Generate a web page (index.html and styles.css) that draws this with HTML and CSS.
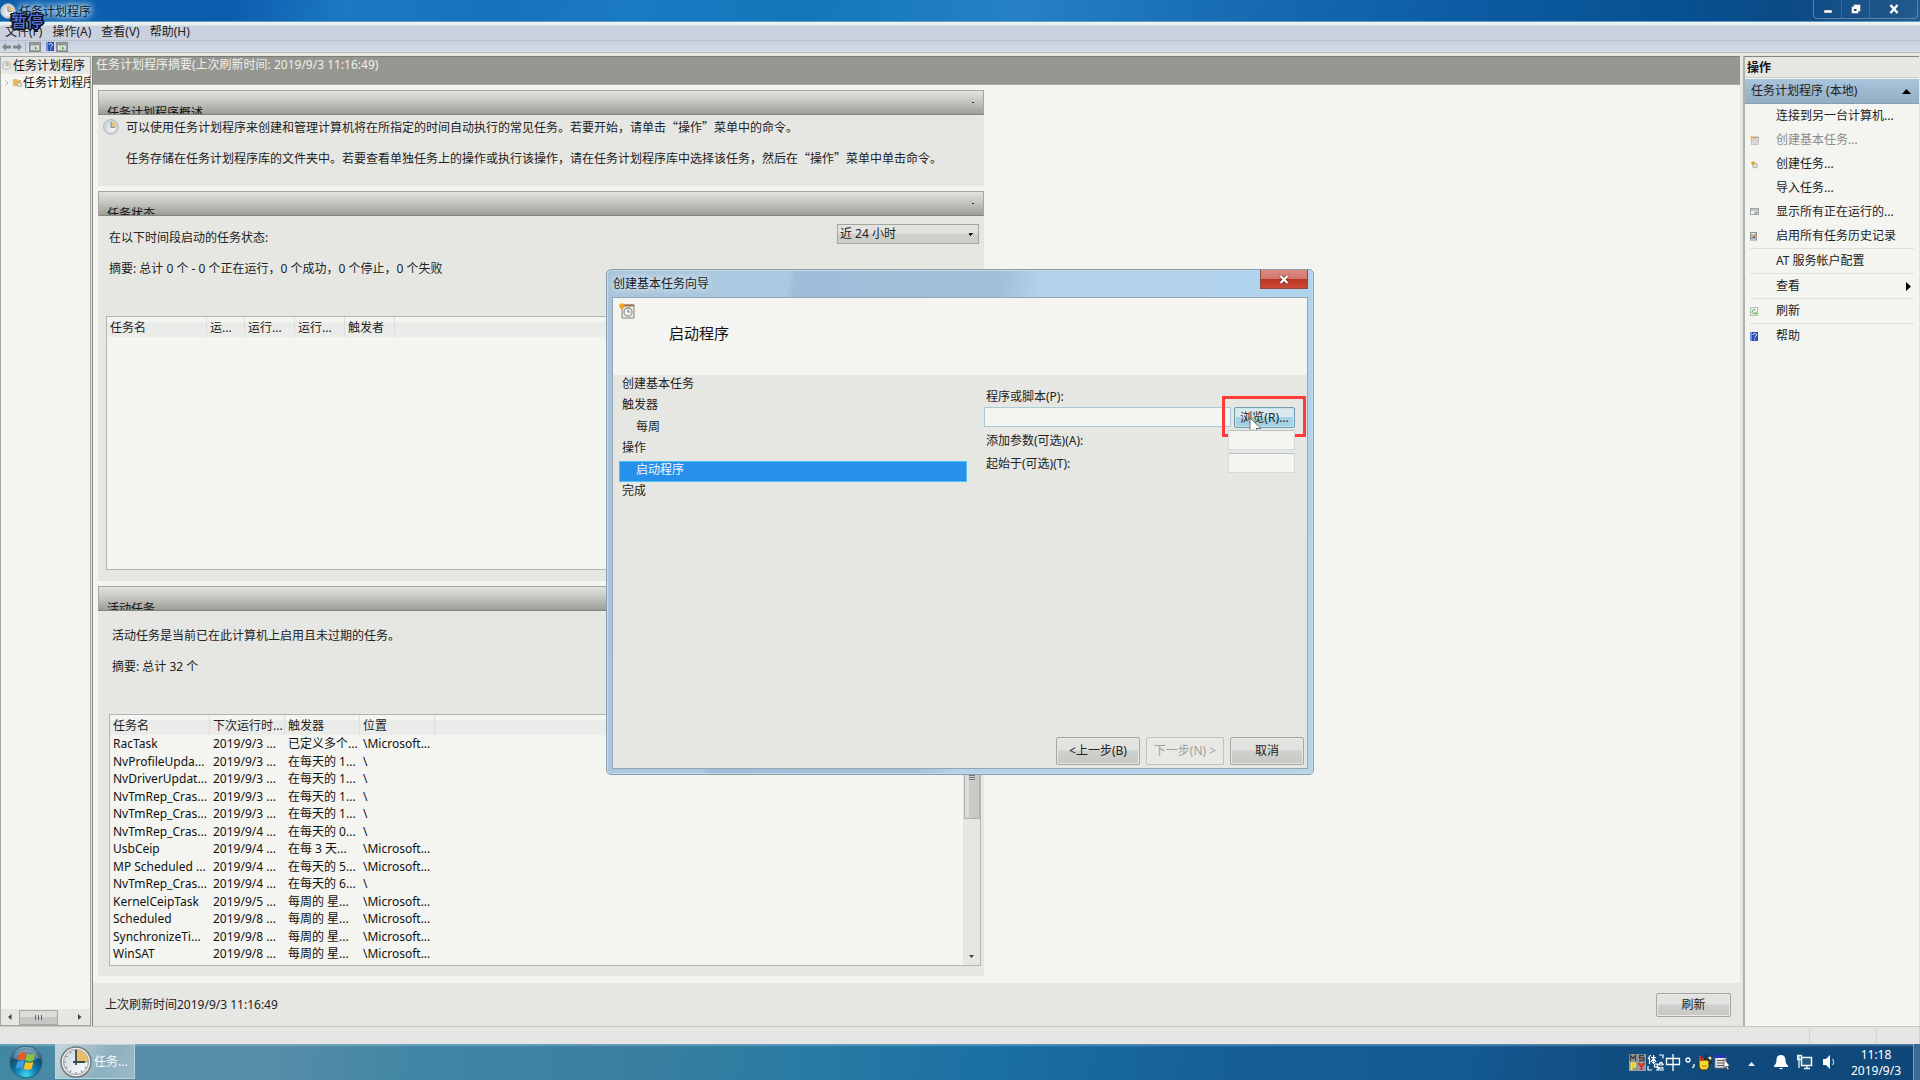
FILE: index.html
```html
<!DOCTYPE html>
<html lang="zh-CN">
<head>
<meta charset="utf-8">
<title>任务计划程序</title>
<link rel="stylesheet" href="styles.css">
</head>
<body>
<svg class="defs" aria-hidden="true">
  <defs>
    <linearGradient id="face" x1="0" y1="0" x2="1" y2="1"><stop offset="0" stop-color="#c9d6de"/><stop offset="1" stop-color="#ffffff"/></linearGradient>
    <radialGradient id="orb" cx="50%" cy="90%" r="90%"><stop offset="0" stop-color="#3fd6f2"/><stop offset=".35" stop-color="#0f7fb0"/><stop offset=".7" stop-color="#14496f"/><stop offset="1" stop-color="#8fb9c9"/></radialGradient>
    <symbol id="clock" viewBox="0 0 32 32">
      <circle cx="16" cy="16" r="15" fill="#eceeed" stroke="#77797a" stroke-width="1.5"/>
      <circle cx="16" cy="16" r="12.5" fill="url(#face)" stroke="#9aa0a3" stroke-width="1"/>
      <path d="M16 16V4a12 12 0 0 1 12 12z" fill="#e9bd68"/>
      <path d="M16 4v2M16 26v2M4 16h2M26 16h2M10 5.600l1 1.800M5.600 10l1.800 1M5.600 22l1.800-1M10 26.400l1-1.800M22 26.400l-1-1.800M26.400 22l-1.800-1" stroke="#7c8a95" stroke-width="1.200"/>
      <path d="M16 4v15M13 16h12" stroke="#3c4752" stroke-width="1.800" fill="none"/>
    </symbol>
    <symbol id="clock-soft" viewBox="0 0 16 16">
      <circle cx="8" cy="8" r="7.300" fill="#dfe3e3" stroke="#a9adae"/>
      <circle cx="8" cy="8" r="5.500" fill="url(#face)" stroke="#b9c6cd" stroke-width=".8"/>
      <path d="M8 8V2.500A5.500 5.500 0 0 1 13.500 8z" fill="#e9c27a"/>
      <path d="M8 3v5.500h4" stroke="#7f8f9b" fill="none"/>
    </symbol>
    <symbol id="task-new" viewBox="0 0 16 16">
      <rect x="3" y="2" width="12" height="13" fill="#eeebe4" stroke="#8b8378"/>
      <path d="M4 2.500h11" stroke="#a5705a" stroke-width="2"/>
      <circle cx="9" cy="9" r="4" fill="#f5f5f2" stroke="#8f979c" stroke-width="1.300"/>
      <path d="M9 6.500V9h2" stroke="#6b6f73" fill="none"/>
      <path d="M3 0v6M0 3h6M1 1l4 4M5 1L1 5" stroke="#f5a11c" stroke-width="1.300"/>
    </symbol>
    <symbol id="help" viewBox="0 0 8 9">
      <rect width="8" height="9" fill="#2a4fb5"/><path d="M0 0h2v9H0z" fill="#7390dd"/>
      <path d="M3 3c0-2 3.500-2 3.500 0 0 1.300-1.700 1.300-1.700 2.600M4.800 6.800v1" stroke="#fff" fill="none"/>
    </symbol>
    <symbol id="pane" viewBox="0 0 12 10">
      <rect x=".5" y=".5" width="11" height="9" fill="#e4e8e4" stroke="#8a8f8f"/><path d="M1 2h10" stroke="#8a8f8f" stroke-width="2"/><path d="M4 3v6" stroke="#b0b5b5"/><path d="M6 4.500l3.500 2L6 8.500z" fill="#54a354"/>
    </symbol>
  </defs>
</svg>

<div class="window">
  <header class="titlebar">
    <svg class="ico-16"><use href="#clock-soft"/></svg>
    <h1 class="window-title">任务计划程序</h1>
    <span class="watermark">暂停</span>
    <div class="window-buttons">
      <button class="win-btn" aria-label="最小化"><svg width="10" height="10"><rect x="1" y="6" width="8" height="3" fill="#fff" stroke="#3a4b5c" stroke-width=".5"/></svg></button>
      <button class="win-btn" aria-label="还原"><svg width="10" height="10"><path d="M2.500 .5h7v7h-2v2h-7v-7h2z" fill="#fff" stroke="#3a4b5c" stroke-width=".5"/><path d="M3 5h2.500v2H3z" fill="#1c3f66"/></svg></button>
      <button class="win-btn win-btn-close" aria-label="关闭"><svg width="10" height="10"><path d="M1.500 1l7 8M8.500 1l-7 8" stroke="#fff" stroke-width="2.300"/></svg></button>
    </div>
  </header>
  <nav class="menubar">
    <button>文件(F)</button><button>操作(A)</button><button>查看(V)</button><button>帮助(H)</button>
  </nav>
  <div class="toolbar">
    <button aria-label="后退"><svg width="9" height="8"><path d="M0 4l4-4v2.500h5v3H4V8z" fill="#84888a"/></svg></button>
    <button aria-label="前进"><svg width="9" height="8"><path d="M9 4L5 0v2.500H0v3h5V8z" fill="#84888a"/></svg></button>
    <span class="tool-sep"></span>
    <button class="tool-toggle" aria-label="显示控制台树"><svg width="10" height="8"><use href="#pane"/></svg></button>
    <button aria-label="帮助"><svg width="8" height="9"><use href="#help"/></svg></button>
    <button class="tool-toggle" aria-label="显示操作窗格"><svg width="10" height="8"><use href="#pane"/></svg></button>
  </div>

  <div class="panes">
    <aside class="tree">
      <ul class="tree-list">
        <li class="tree-item is-current"><svg width="9" height="9"><use href="#clock-soft"/></svg>任务计划程序</li>
        <li class="tree-item tree-child"><svg width="4" height="6"><path d="M.5.5L3 3 .5 5.500" stroke="#b5b5b0" fill="none"/></svg><svg width="9" height="9"><path d="M0 1h4l1 1h3v6H0z" fill="#e8bb58"/><circle cx="6.500" cy="6.500" r="2.500" fill="#dcdcd4" stroke="#9c9884" stroke-width=".6"/></svg>任务计划程序库</li>
      </ul>
      <div class="hscroll"><svg width="4" height="6"><path d="M3.500 0v6L0 3z" fill="#444"/></svg><span class="hthumb"></span><svg class="hscroll-end" width="4" height="6"><path d="M0 0v6l3.500-3z" fill="#444"/></svg></div>
    </aside>

    <main class="summary">
      <h2 class="summary-title">任务计划程序摘要(上次刷新时间: 2019/9/3 11:16:49)</h2>
      <div class="summary-body">
        <section class="group">
          <h3 class="group-head">任务计划程序概述</h3>
          <div class="overview">
            <svg class="ico-16"><use href="#clock-soft"/></svg>
            <div class="overview-text">
              <p>可以使用任务计划程序来创建和管理计算机将在所指定的时间自动执行的常见任务。若要开始，请单击“操作”菜单中的命令。</p>
              <p>任务存储在任务计划程序库的文件夹中。若要查看单独任务上的操作或执行该操作，请在任务计划程序库中选择该任务，然后在“操作”菜单中单击命令。</p>
            </div>
          </div>
        </section>

        <section class="group">
          <h3 class="group-head">任务状态</h3>
          <div class="status">
            <div class="status-row">
              <label for="period">在以下时间段启动的任务状态:</label>
              <select id="period" class="select"><option>近 24 小时</option></select>
            </div>
            <p>摘要: 总计 0 个 - 0 个正在运行，0 个成功，0 个停止，0 个失败</p>
            <div class="listbox status-list">
              <table class="grid grid-status">
                <thead><tr><th>任务名</th><th>运...</th><th>运行...</th><th>运行...</th><th>触发者</th><th></th></tr></thead>
              </table>
            </div>
          </div>
        </section>

        <section class="group">
          <h3 class="group-head">活动任务</h3>
          <div class="active">
            <p>活动任务是当前已在此计算机上启用且未过期的任务。</p>
            <p>摘要: 总计 32 个</p>
            <div class="listbox active-list">
              <table class="grid grid-active">
                <thead><tr><th>任务名</th><th>下次运行时...</th><th>触发器</th><th>位置</th><th></th></tr></thead>
                <tbody>
                  <tr><td>RacTask</td><td>2019/9/3 ...</td><td>已定义多个...</td><td>\Microsoft...</td><td></td></tr>
                  <tr><td>NvProfileUpda...</td><td>2019/9/3 ...</td><td>在每天的 1...</td><td>\</td><td></td></tr>
                  <tr><td>NvDriverUpdat...</td><td>2019/9/3 ...</td><td>在每天的 1...</td><td>\</td><td></td></tr>
                  <tr><td>NvTmRep_Cras...</td><td>2019/9/3 ...</td><td>在每天的 1...</td><td>\</td><td></td></tr>
                  <tr><td>NvTmRep_Cras...</td><td>2019/9/3 ...</td><td>在每天的 1...</td><td>\</td><td></td></tr>
                  <tr><td>NvTmRep_Cras...</td><td>2019/9/4 ...</td><td>在每天的 0...</td><td>\</td><td></td></tr>
                  <tr><td>UsbCeip</td><td>2019/9/4 ...</td><td>在每 3 天...</td><td>\Microsoft...</td><td></td></tr>
                  <tr><td>MP Scheduled ...</td><td>2019/9/4 ...</td><td>在每天的 5...</td><td>\Microsoft...</td><td></td></tr>
                  <tr><td>NvTmRep_Cras...</td><td>2019/9/4 ...</td><td>在每天的 6...</td><td>\</td><td></td></tr>
                  <tr><td>KernelCeipTask</td><td>2019/9/5 ...</td><td>每周的 星...</td><td>\Microsoft...</td><td></td></tr>
                  <tr><td>Scheduled</td><td>2019/9/8 ...</td><td>每周的 星...</td><td>\Microsoft...</td><td></td></tr>
                  <tr><td>SynchronizeTi...</td><td>2019/9/8 ...</td><td>每周的 星...</td><td>\Microsoft...</td><td></td></tr>
                  <tr><td>WinSAT</td><td>2019/9/8 ...</td><td>每周的 星...</td><td>\Microsoft...</td><td></td></tr>
                </tbody>
              </table>
              <div class="vscroll"><span class="vthumb"></span><svg width="5" height="3"><path d="M0 0h5L2.500 3z" fill="#444"/></svg></div>
            </div>
          </div>
        </section>
      </div>
      <footer class="summary-foot"><span>上次刷新时间2019/9/3 11:16:49</span><button class="btn btn-refresh">刷新</button></footer>
    </main>

    <aside class="actions">
      <h2 class="actions-title">操作</h2>
      <h3 class="actions-group">任务计划程序 (本地)<svg width="9" height="5"><path d="M0 5h9L4.500 0z"/></svg></h3>
      <ul class="action-list">
        <li><button><span class="slot"></span>连接到另一台计算机...</button></li>
        <li><button disabled><span class="slot"><svg width="9" height="9" opacity=".8"><use href="#task-new"/></svg></span>创建基本任务...</button></li>
        <li><button><span class="slot"><svg width="9" height="9"><circle cx="5" cy="5.500" r="2.500" fill="#d9d9cd" stroke="#9d9a86" stroke-width=".7"/><circle cx="3" cy="3" r="1.800" fill="#e5a024"/></svg></span>创建任务...</button></li>
        <li><button><span class="slot"></span>导入任务...</button></li>
        <li><button><span class="slot"><svg width="9" height="8"><rect x=".5" y=".5" width="8" height="6" fill="#f2f2ee" stroke="#a0a6a6"/><path d="M1 2h7" stroke="#8b96a3"/><circle cx="6" cy="5" r="1.800" fill="#a3ada8"/></svg></span>显示所有正在运行的...</button></li>
        <li><button><span class="slot"><svg width="8" height="9"><rect x=".5" y=".5" width="6" height="7.500" fill="#eef0f2" stroke="#8c949c"/><path d="M2 2v5M3 6h3" stroke="#56719c"/><circle cx="5" cy="3" r="1.400" fill="#d8a83c"/><path d="M3 4h2v2H3z" fill="#c05050"/></svg></span>启用所有任务历史记录</button></li>
        <li class="ruled"><button><span class="slot"></span>AT 服务帐户配置</button></li>
        <li class="ruled"><button><span class="slot"></span>查看<svg class="more" width="5" height="9"><path d="M0 0v9l5-4.500z"/></svg></button></li>
        <li class="ruled"><button><span class="slot"><svg width="8" height="9"><rect x=".5" y=".5" width="7" height="8" fill="#edf3ea" stroke="#b5bdb2"/><path d="M6 5.500A2 2 0 1 1 5.500 3.300M4.500 6l2.500.5" stroke="#4cab4c" fill="none"/></svg></span>刷新</button></li>
        <li class="ruled"><button><span class="slot"><svg width="8" height="9"><use href="#help"/></svg></span>帮助</button></li>
      </ul>
    </aside>
  </div>
  <div class="statusbar"><span></span><span></span><span></span></div>

  <div class="dialog" role="dialog" aria-labelledby="dlg-title">
    <div class="dialog-bar">
      <h2 id="dlg-title" class="dialog-title">创建基本任务向导</h2>
      <button class="dialog-close" aria-label="关闭"><svg width="10" height="9"><path d="M1.500 1l7 7M8.500 1l-7 7" stroke="#6b2a25" stroke-width="3.500"/><path d="M1.500 1l7 7M8.500 1l-7 7" stroke="#fff" stroke-width="2.200"/></svg></button>
    </div>
    <div class="dialog-inner">
      <div class="wizard-head">
        <svg class="ico-16"><use href="#task-new"/></svg>
        <h3>启动程序</h3>
      </div>
      <div class="wizard-body">
        <ol class="steps">
          <li>创建基本任务</li><li>触发器</li><li class="sub">每周</li><li>操作</li><li class="sub is-active">启动程序</li><li>完成</li>
        </ol>
        <form class="wizard-form">
          <label for="prog">程序或脚本(P):</label>
          <div class="field-row">
            <input id="prog" class="field field-wide" type="text">
            <button type="button" class="btn btn-browse">浏览(R)...</button>
            <span class="highlight"></span>
            <svg class="cursor" width="14" height="20" viewBox="0 0 14 20"><path d="M1 1v14.500l3.500-3 2.500 6 2.500-1-2.500-6h5z" fill="#fff" stroke="#6e7377"/></svg>
          </div>
          <div class="field-row"><label for="args">添加参数(可选)(A):</label><input id="args" class="field field-short" type="text"></div>
          <div class="field-row"><label for="start">起始于(可选)(T):</label><input id="start" class="field field-short" type="text"></div>
        </form>
      </div>
      <div class="wizard-foot">
        <button class="btn btn-back">&lt;上一步(B)</button>
        <button class="btn btn-next" disabled>下一步(N) &gt;</button>
        <button class="btn btn-cancel">取消</button>
      </div>
    </div>
  </div>
</div>

<footer class="taskbar">
  <button class="start" aria-label="开始"><svg width="34" height="34" viewBox="0 0 34 34">
    <circle cx="17" cy="17" r="16" fill="url(#orb)" stroke="#2b5a75"/>
    <path d="M4 13a14 13 0 0 1 26 0c-8 4-18 4-26 0z" fill="#fff" opacity=".28"/>
    <path d="M10 9c3-2 5-2 7-1l-1.500 7c-2-1-4-1-7 1z" fill="#ee5a24"/>
    <path d="M18 8.500c3 1.500 5 1.500 8 0l-1.500 7c-3 1.500-5 1.500-8 0z" fill="#8cc63f"/>
    <path d="M8.200 17.200c3-2 5-2 7-1l-1.500 7c-2-1-4-1-7 1z" fill="#3f9ae0"/>
    <path d="M16.300 16.700c3 1.500 5 1.500 8 0l-1.500 7c-3 1.500-5 1.500-8 0z" fill="#fbc31c"/>
  </svg></button>
  <button class="task"><svg width="32" height="32"><use href="#clock"/></svg>任务...</button>
  <div class="tray">
    <svg width="17" height="17"><rect width="17" height="17" fill="#96989a"/><path d="M1.500 7V1.500l2.500 3 2.500-3V7M15 1.500h-4.500v2.500H15v2.500h-5" fill="none" stroke="#3c3c3c" stroke-width="1.300"/><path d="M2.500 16V9.500H6v3H3" fill="none" stroke="#f2e532" stroke-width="2"/><path d="M9.500 9l3 3.500 3-3.500M12.500 12.500V16" fill="none" stroke="#d92c2c" stroke-width="2"/></svg>
    <svg width="17" height="17" fill="none" stroke="#fff" stroke-width="1.200"><path d="M3.500 1L1 5M2.500 4v6M4 3.500h5M6.500 1v9M6.500 4L4 8M6.500 4L9 8M5 8.500h3M12 1h4v3.500M1 12v4h4M7.500 10h3l-.5 4M7.500 10v3h3.500v3H9M14 8l-2.500 3M14 8l2.500 3M12.500 11h3M12 13l.5 2M14 13v2M16 13l-.5 2M11.500 16H17"/></svg>
    <svg width="16" height="17" fill="none" stroke="#fff" stroke-width="1.300"><path d="M1.500 4.500h13v6h-13zM8 0v17"/></svg>
    <svg width="14" height="17" fill="none" stroke="#fff" stroke-width="1.300"><circle cx="6" cy="6" r="2"/><path d="M12 10v2l-1.500 2"/></svg>
    <svg width="16" height="17"><path d="M2 6h10v7l-2 3H4l-2-3z" fill="#f4d72d" stroke="#302a10"/><path d="M3 6V2M5 7l1-3" stroke="#df3025" stroke-width="2"/><path d="M8 6l1-5M11 7l3-5M12 10l3-3" stroke="#262213" stroke-width="1.500"/><circle cx="13" cy="4" r="1.500" fill="#f4e99a"/><path d="M5 12h5" stroke="#b37c12"/></svg>
    <svg width="17" height="17"><rect x="1" y="2" width="11" height="12" fill="#e6e6ec" stroke="#777"/><path d="M0 2.500h12" stroke="#2834b8" stroke-width="3"/><path d="M3 6.500h7M3 9h7M3 11.500h7" stroke="#555"/><path d="M10 5v9l2-2 1.500 4 1.500-1-1.500-3H16z" fill="#fff" stroke="#333" stroke-width=".6"/></svg>
    <svg class="tray-up" width="7" height="4"><path d="M0 4h7L3.500 0z" fill="#e8eff5"/></svg>
    <svg class="tray-bell" width="16" height="16"><path d="M8 1c3 0 4.500 2 4.500 5 0 3 1 4.500 2.500 5.500V13H1v-1.500C2.500 10.500 3.500 9 3.500 6 3.500 3 5 1 8 1zM6 14h4l-2 1.500z" fill="#fff"/></svg>
    <svg class="tray-net" width="16" height="16"><rect x="4.500" y="3.500" width="10" height="8" fill="#255985" stroke="#f2f6f8" stroke-width="1.500"/><path d="M7 14.500h6M10 12v2M2 1v13M.5 1.500h4v4h-4z" stroke="#f2f6f8" stroke-width="1.300" fill="none"/></svg>
    <svg class="tray-vol" width="16" height="16"><path d="M1 5h3l4-4v14l-4-4H1z" fill="#fff"/><path d="M10.500 5c1.500 2 1.500 4 0 6" stroke="#a8c5d8" fill="none" stroke-width="1.300"/></svg>
  </div>
  <div class="datetime"><time>11:18</time><span>2019/9/3</span></div>
  <button class="show-desktop" aria-label="显示桌面"></button>
</footer>
</body>
</html>
```
FILE: styles.css
```css
* { box-sizing: border-box; }
body {
  margin: 0;
  min-height: 100vh;
  display: flex;
  flex-direction: column;
  font: 12px/16px "Noto Sans", "Noto Sans CJK SC", sans-serif;
  color: #222;
  background: #f4f5f0;
}
h1, h2, h3, p, ul, ol { margin: 0; padding: 0; font-size: 12px; font-weight: 400; list-style: none; }
button, input, select { font: inherit; color: inherit; margin: 0; }
button { display: flex; align-items: center; padding: 0; border: 0; background: none; white-space: nowrap; }
svg { display: block; flex: none; }
.defs { position: absolute; width: 0; height: 0; }
.ico-16 { width: 16px; height: 16px; }

.window { position: relative; flex: 1; display: flex; flex-direction: column; }

.titlebar {
  position: relative;
  display: flex;
  align-items: center;
  gap: 3px;
  height: 22px;
  background: linear-gradient(100deg, #0d5fae 0, #0c5cae 12%, #1b79c2 18%, #1573bd 26%, #1a7ac2 33%, #1277b9 42%, #2681c6 53%, #176cb2 64%, #0c5ca4 76%, #07508f 88%, #0b4a86 93%, #245a8b 100%);
  border-bottom: 1px solid #5d9bc8;
}
.window-title { padding-top: 2px; color: #10202e; text-shadow: 0 0 4px #b9dcf2, 0 0 6px #b9dcf2, 0 0 8px #a9d1ec, 0 0 12px #a9d1ec; }
.watermark {
  position: absolute;
  left: 11px;
  top: 11px;
  z-index: 2;
  font-size: 16px;
  line-height: 20px;
  font-weight: 500;
  color: #5572dc;
  text-shadow: 1px 1px #0a0d18, -1px -1px #0a0d18, 1px -1px #0a0d18, -1px 1px #0a0d18, 2px 0 #0a0d18, -2px 0 #0a0d18, 0 2px #0a0d18;
}
.window-buttons { display: flex; align-self: flex-start; margin-left: auto; margin-right: 2px; height: 19px; border: 1px solid #5a83ab; border-top: 0; border-radius: 0 0 4px 4px; }
.win-btn { width: 28px; justify-content: center; border-right: 1px solid #3d6c99; }
.win-btn-close { width: 47px; border-right: 0; }

.menubar { display: flex; gap: 10px; height: 19px; padding: 3px 5px 0; background: linear-gradient(#eef5f3 0, #e6eeee 3px, #cad0de 4px); border-bottom: 1px solid #b9c1cc; }
.menubar button { height: 14px; line-height: 14px; }
.toolbar { display: flex; align-items: center; gap: 2px; height: 12px; padding: 0 2px; background: linear-gradient(#c6d0de, #d4dde7); border-bottom: 1px solid #b7bab8; }
.tool-sep { width: 1px; height: 9px; margin: 0 1px; background: #aab1ba; }
.tool-toggle { width: 12px; height: 10px; justify-content: center; border: 1px solid #858c92; margin-right: 3px; }

.panes { flex: 1; display: grid; grid-template-columns: 91px minmax(0, 1fr) 177px; padding-top: 3px; background: #e6e6e3; }
.tree { display: flex; flex-direction: column; overflow: hidden; border: 1px solid #a5a7a2; background: #f4f5f0; }
.tree-list { flex: 1; }
.tree-item { display: flex; align-items: center; gap: 2px; height: 17px; padding-left: 1px; white-space: nowrap; color: #111; }
.is-current { background: #e6e7e3; }
.tree-child { padding-left: 4px; gap: 4px; }
.tree-child svg + svg { margin-right: -3px; }
.hscroll { display: flex; align-items: center; height: 16px; padding: 0 8px 0 7px; background: #e6e6e2; }
.hthumb { width: 39px; height: 15px; margin-left: 7px; border: 1px solid #a6a8a4; background: repeating-linear-gradient(90deg, #666 0 1px, transparent 1px 3px) 50% 4px / 7px 5px no-repeat, linear-gradient(#dcdddb 50%, #c5c7c4 50%); }
.hscroll-end { margin-left: auto; }

.summary { display: flex; flex-direction: column; margin: 0 3px 0 1px; border-left: 1px solid #838581; }
.summary-title { height: 29px; padding: 0 3px; color: #eff0ea; background: #969791; border-top: 1px solid #7b7c77; border-bottom: 1px solid #aaaba5; }
.summary-body { flex: 1; display: flex; flex-direction: column; gap: 5px; padding: 5px; background: #f4f5f0; }
.group { max-width: 886px; background: #e6e7e2; }
.group-head {
  position: relative;
  height: 25px;
  padding: 14px 8px 0;
  overflow: hidden;
  color: #111;
  border: 1px solid #a6a8a3;
  border-bottom-color: #83857f;
  background: linear-gradient(#e2e3df, #c3c4bf 50%, #9c9d97);
}
.group-head::after { content: ""; position: absolute; right: 9px; top: 11px; width: 2px; height: 1px; background: #333; }

.overview { display: flex; gap: 7px; height: 71px; padding: 4px 5px; }
.overview-text { display: flex; flex-direction: column; gap: 15px; font-family: "Noto Sans CJK SC", sans-serif; white-space: nowrap; }

.status { padding: 8px 8px 11px; }
.status-row { display: flex; align-items: center; justify-content: space-between; height: 20px; }
.status-row label, .status p { padding-left: 3px; }
.status p { margin: 17px 0 39px; }
.status-row label { padding-top: 8px; }
.select {
  appearance: none;
  width: 142px;
  height: 20px;
  margin-right: -3px;
  padding: 0 2px;
  border: 1px solid #a3a5a1;
  border-radius: 0;
  background: linear-gradient(45deg, transparent 50%, #222 50%) 130px 8px / 3px 3px no-repeat, linear-gradient(-45deg, transparent 50%, #222 50%) 133px 8px / 3px 3px no-repeat, linear-gradient(#e3e4e0 45%, #cfd0cc 50%, #cdceca);
}
.listbox { display: flex; border: 1px solid #b3b5b2; background: #f4f5f0; }
.status-list { height: 254px; }
.grid { flex: 1; table-layout: fixed; border-collapse: separate; border-spacing: 0; align-self: flex-start; width: 100%; }
.grid th, .grid td { padding: 0 0 0 3px; font-weight: 400; text-align: left; white-space: nowrap; overflow: hidden; line-height: 16px; }
.grid th { height: 20px; padding-top: 2px; border-right: 1px solid #dddfdc; background: linear-gradient(#f4f5f1 25%, #e9ebe9 30%, #ecedeb); }
.grid-status th:nth-child(1) { width: 100px; }
.grid-status th:nth-child(2) { width: 38px; }
.grid-status th:nth-child(n+3) { width: 50px; }
.grid-active th:nth-child(1) { width: 100px; }
.grid-active th:nth-child(n+2) { width: 75px; }
.grid-status th:last-child, .grid-active th:last-child { width: auto; border-right: 0; }
.grid-active td { height: 17px; color: #111; }
.grid-active tr:nth-child(odd) td { height: 18px; }

.active { padding: 17px 3px 10px 11px; }
.active p { padding-left: 3px; margin-bottom: 15px; }
.active p + p { margin-bottom: 39px; }
.active-list { height: 252px; }
.vscroll { display: flex; flex-direction: column; align-items: center; flex: none; width: 17px; padding-bottom: 7px; background: #e6e6e2; }
.vthumb { width: 16px; height: 87px; margin: 17px 0 auto; border: 1px solid #adafac; background: repeating-linear-gradient(#777 0 1px, transparent 1px 2px) 50% 42px / 6px 6px no-repeat, linear-gradient(90deg, #dcdddb 25%, #cbcdca 30%, #c6c8c5); }

.summary-foot { display: flex; align-items: center; justify-content: space-between; height: 43px; padding: 0 9px 0 12px; background: #e6e7e2; }
.btn { justify-content: center; border: 1px solid #a3a5a1; border-radius: 2px; background: linear-gradient(#e2e3e0 45%, #cfd0cd 50%, #c8c9c5); box-shadow: inset 0 0 0 1px #e9eae7; }
.btn-refresh { width: 75px; height: 24px; }

.actions { border-left: 2px solid #afb1ad; border-top: 1px solid #83857f; background: #f4f5f0; margin-right: 1px; }
.actions-title { height: 21px; padding: 3px 2px 0; font-weight: 700; color: #111; background: #e6e7e3; border-bottom: 1px solid #cbccc9; }
.actions-group { display: flex; align-items: center; justify-content: space-between; height: 25px; padding: 0 8px 0 6px; background: linear-gradient(#aac4db, #93adc3); border-bottom: 1px solid #86a0b6; margin-top: 1px; }
.action-list { padding: 0 5px; }
.action-list button { width: 100%; height: 24px; }
.action-list button:disabled { color: #8b8c88; }
.slot { width: 26px; }
.ruled { border-top: 1px solid #dfe0dc; }
.more { margin-left: auto; margin-right: 3px; }

.statusbar { display: flex; height: 18px; background: #e6e5e3; border-top: 1px solid #c6c7c4; }
.statusbar span { border-right: 1px solid #d4d4d1; width: 67px; }
.statusbar span:first-child { flex: 1; }
.statusbar span:last-child { width: 43px; }

.dialog {
  position: absolute;
  left: 606px;
  top: 269px;
  width: 708px;
  height: 506px;
  padding: 0 5px 5px;
  display: flex;
  flex-direction: column;
  border: 1px solid #8a9da8;
  border-radius: 5px;
  background: linear-gradient(100deg, #a9c4da 0, #abcae2 23%, #9dbdd8 24%, #a1c1db 50%, #b3d3ec 55%, #b2d3ee 90%, #b9d4e6);
  box-shadow: inset 0 0 0 1px #c6dbe9;
}
.dialog-bar { display: flex; justify-content: space-between; align-items: flex-start; height: 27px; }
.dialog-title { padding: 6px 0 0 1px; color: #16222c; text-shadow: 0 0 6px #e4f0f8, 0 0 8px #e4f0f8; }
.dialog-close { width: 48px; height: 19px; justify-content: center; border: 1px solid #8f4a46; border-top: 0; background: linear-gradient(#dd8c83 0, #d3766c 48%, #bd3524 52%, #cb4c38); }
.dialog-inner { flex: 1; display: flex; flex-direction: column; border: 1px solid #94a7b0; background: #e6e7e2; }
.wizard-head { display: flex; gap: 34px; height: 77px; padding: 5px 6px; background: #f4f5f0; }
.wizard-head h3 { font-size: 15px; line-height: 20px; padding-top: 20px; color: #111; }
.wizard-body { flex: 1; display: grid; grid-template-columns: 348px 312px; column-gap: 16px; padding: 0 6px; align-items: start; }
.steps li { height: 21px; padding-left: 3px; line-height: 16px; border: 1px solid transparent; border-width: 1px 0; }
.steps li:nth-child(even) { height: 22px; }
.steps .sub { padding-left: 17px; }
.steps .is-active { padding-left: 16px; color: #f4f8fb; background: #2690ea; border: 1px solid #4cc3f3; }
.wizard-form { display: flex; flex-direction: column; gap: 2px; padding-top: 14px; }
.wizard-form label { padding-left: 3px; }
.field-row { position: relative; display: flex; justify-content: space-between; align-items: center; height: 21px; }
.field { align-self: flex-start; height: 20px; border: 1px solid #d3dadb; border-top-color: #b9c3c5; background: #f4f5f0; padding: 0 3px; }
.field-wide { width: 247px; margin-left: 1px; border-color: #a9c9d6; }
.field-short { width: 67px; }
.btn-browse { width: 61px; height: 21px; border-color: #6f9cb0; background: linear-gradient(#d9e9ee 45%, #a8d1e2 50%, #a3d2e4); box-shadow: inset 0 0 0 1px #c5e4ee; }
.highlight { position: absolute; right: -11px; top: -11px; width: 84px; height: 41px; border: 3px solid #ff3b37; }
.cursor { position: absolute; left: 266px; top: 10px; }
.wizard-foot { display: flex; justify-content: flex-end; gap: 6px; padding: 0 3px 3px; }
.wizard-foot .btn { height: 28px; }
.btn-back { width: 84px; }
.btn-next { width: 78px; }
.btn-cancel { width: 74px; }
.btn:disabled { color: #a0a19e; border-color: #c0c2be; background: #e8e9e5; }

.taskbar {
  display: flex;
  align-items: center;
  height: 36px;
  padding-left: 9px;
  background: linear-gradient(rgba(190, 215, 230, .45) 0, transparent 3px), linear-gradient(100deg, #3f87a3 0, #588ea9 7%, #578da9 14%, #3f86a4 22%, #3a7f9f 33%, #287ba4 42%, #1a6fa3 52%, #155f96 64%, #145a92 76%, #114c80 84%, #0f4778 100%);
}
.start { width: 34px; height: 34px; }
.task { align-self: stretch; width: 80px; margin: 0 0 1px 12px; padding-left: 4px; gap: 2px; color: #f4f8fa; border: 1px solid #bdd3db; background: linear-gradient(120deg, #c6d7d9, #8db0bf 60%, #9bbac6); }
.tray { display: flex; align-items: center; gap: 1px; margin-left: auto; }
.tray-up { margin: 4px 17px 0 16px; }
.tray-bell { margin-right: 7px; }
.tray-net { margin-right: 8px; }
.tray-vol { margin-right: 1px; }
.datetime { display: flex; flex-direction: column; align-items: center; width: 74px; padding-top: 2px; color: #fff; }
.show-desktop { align-self: stretch; width: 7px; border-left: 1px solid #7ea1bb; background: #3c6b92; }
```
